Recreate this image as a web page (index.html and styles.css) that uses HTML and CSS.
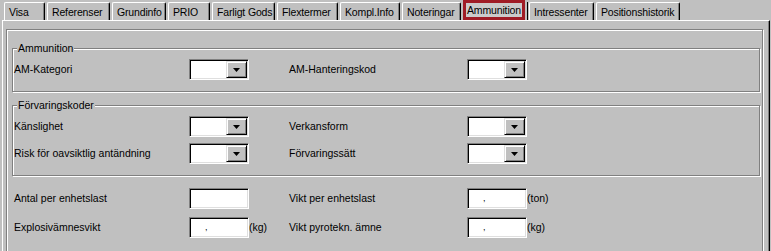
FILE: index.html
```html
<!DOCTYPE html>
<html lang="sv">
<head>
<meta charset="utf-8">
<title>Ammunition</title>
<link rel="stylesheet" href="styles.css">
</head>
<body>
<div class="window">
  <div class="tabs">
    <div class="tab tab-visa">Visa</div>
    <div class="tab tab-referenser">Referenser</div>
    <div class="tab tab-grundinfo">Grundinfo</div>
    <div class="tab tab-prio">PRIO</div>
    <div class="tab tab-farligt">Farligt Gods</div>
    <div class="tab tab-flextermer">Flextermer</div>
    <div class="tab tab-kompl">Kompl.Info</div>
    <div class="tab tab-noteringar">Noteringar</div>
    <div class="tab-active"><span class="focus">Ammunition</span></div>
    <div class="tab tab-intressenter">Intressenter</div>
    <div class="tab tab-position">Positionshistorik</div>
  </div>
  <div class="panel">
    <div class="frame">
      <div class="group">
        <div class="group-title">Ammunition</div>
        <div class="row">
          <span class="label">AM-Kategori</span>
          <span class="combo"><span class="combo-field"></span><span class="combo-btn"><svg class="arrow" width="7" height="4" viewBox="0 0 7 4"><polygon points="0,0 7,0 3.5,4"/></svg></span></span>
          <span></span>
          <span class="label">AM-Hanteringskod</span>
          <span class="combo"><span class="combo-field"></span><span class="combo-btn"><svg class="arrow" width="7" height="4" viewBox="0 0 7 4"><polygon points="0,0 7,0 3.5,4"/></svg></span></span>
        </div>
      </div>
      <div class="group">
        <div class="group-title">Förvaringskoder</div>
        <div class="row">
          <span class="label">Känslighet</span>
          <span class="combo"><span class="combo-field"></span><span class="combo-btn"><svg class="arrow" width="7" height="4" viewBox="0 0 7 4"><polygon points="0,0 7,0 3.5,4"/></svg></span></span>
          <span></span>
          <span class="label">Verkansform</span>
          <span class="combo"><span class="combo-field"></span><span class="combo-btn"><svg class="arrow" width="7" height="4" viewBox="0 0 7 4"><polygon points="0,0 7,0 3.5,4"/></svg></span></span>
        </div>
        <div class="row">
          <span class="label">Risk för oavsiktlig antändning</span>
          <span class="combo"><span class="combo-field"></span><span class="combo-btn"><svg class="arrow" width="7" height="4" viewBox="0 0 7 4"><polygon points="0,0 7,0 3.5,4"/></svg></span></span>
          <span></span>
          <span class="label">Förvaringssätt</span>
          <span class="combo"><span class="combo-field"></span><span class="combo-btn"><svg class="arrow" width="7" height="4" viewBox="0 0 7 4"><polygon points="0,0 7,0 3.5,4"/></svg></span></span>
        </div>
      </div>
      <div class="plain">
        <div class="row">
          <span class="label">Antal per enhetslast</span>
          <span class="textbox"></span>
          <span></span>
          <span class="label">Vikt per enhetslast</span>
          <span class="textbox">,</span>
          <span class="unit">(ton)</span>
        </div>
        <div class="row">
          <span class="label">Explosivämnesvikt</span>
          <span class="textbox">,</span>
          <span class="unit">(kg)</span>
          <span class="label">Vikt pyrotekn. ämne</span>
          <span class="textbox">,</span>
          <span class="unit">(kg)</span>
        </div>
      </div>
    </div>
  </div>
</div>
</body>
</html>
```

FILE: styles.css
```css
html, body {
  margin: 0;
  padding: 0;
  height: 251px;
  overflow: hidden;
  background: #c0c0c0;
}

body {
  font-family: "Liberation Sans", Arial, sans-serif;
  font-size: 10.5px;
  color: #000;
}

.window {
  width: 771px;
}

/* ---------- tabs ---------- */
.tabs {
  display: flex;
  height: 20px;
  padding-left: 4px;
}

.tab {
  box-sizing: border-box;
  height: 18px;
  margin-top: 2px;
  margin-right: 2px;
  padding: 3px 0 0 4px;
  line-height: 13px;
  letter-spacing: -0.15px;
  white-space: nowrap;
  overflow: hidden;
  border-top: 1px solid #fff;
  border-left: 1px solid #fff;
  border-right: 1px solid #000;
  border-radius: 2px 2px 0 0;
  box-shadow: inset -1px 0 #808080;
}

.tab-visa { width: 41px; }
.tab-referenser { width: 63px; }
.tab-grundinfo { width: 54px; }
.tab-prio { width: 42px; }
.tab-farligt { width: 63px; }
.tab-flextermer { width: 61px; }
.tab-kompl { width: 60px; }
.tab-noteringar { width: 59px; }
.tab-intressenter { width: 65px; }
.tab-position { width: 84px; margin-right: 0; }

.tab-active {
  box-sizing: border-box;
  width: 65px;
  height: 18px;
  margin-top: 2px;
  margin-right: 1px;
  border-right: 1px solid #000;
}

.focus {
  display: block;
  box-sizing: border-box;
  width: 62px;
  height: 20px;
  margin-top: -2px;
  border: 3px solid #a01c26;
  background: #cbcbcb;
  padding: 1px 0 0 1px;
  line-height: 13px;
  letter-spacing: -0.15px;
  white-space: nowrap;
  overflow: hidden;
}

/* ---------- panel ---------- */
.panel {
  box-sizing: border-box;
  width: 768px;
  margin-left: 2px;
  border-top: 1px solid #fff;
  border-left: 1px solid #fff;
  border-right: 1px solid #000;
  box-shadow: inset -1px 0 #808080;
  padding: 8px 6px 0 3px;
}

.frame {
  border: 1px solid #808080;
  box-shadow: inset 1px 1px #fff, 1px 1px #fff;
  padding: 18px 2px 40px 5px;
}

.group {
  border: 1px solid #808080;
  box-shadow: inset 1px 1px #fff, 1px 1px #fff;
  padding: 0 0 11px 1px;
}

.group + .group {
  margin-top: 13px;
}

.group-title {
  width: fit-content;
  margin: -7px 0 0 3px;
  padding: 0 1px;
  line-height: 13px;
  background: #c0c0c0;
  white-space: nowrap;
}

.plain {
  margin-top: 12px;
  padding-left: 2px;
}

/* ---------- rows ---------- */
.row {
  display: grid;
  grid-template-columns: 175px 60px 40px 178px 60px auto;
  align-items: center;
  height: 21px;
  margin-top: 4px;
}

.row + .row {
  margin-top: 6px;
}

.plain .row {
  margin-top: 0;
}

.plain .row + .row {
  margin-top: 8px;
}

.label, .unit {
  white-space: nowrap;
  line-height: 13px;
}

/* ---------- controls ---------- */
.combo, .textbox {
  box-sizing: border-box;
  width: 60px;
  height: 21px;
  border: 1px solid;
  border-color: #808080 #fff #fff #808080;
  box-shadow: inset 1px 1px #000, inset -1px -1px #dfdfdf;
  background: #fff;
}

.combo {
  display: flex;
  padding: 1px;
}

.combo-field {
  flex: 1;
}

.combo-btn {
  box-sizing: border-box;
  display: flex;
  align-items: center;
  justify-content: center;
  width: 21px;
  height: 17px;
  background: #c0c0c0;
  border: 1px solid;
  border-color: #dfdfdf #000 #000 #dfdfdf;
  box-shadow: inset 1px 1px #fff, inset -1px -1px #808080;
}

.arrow {
  display: block;
  fill: #000;
}

.textbox {
  display: block;
  padding-left: 15px;
  font-size: 9px;
  line-height: 19px;
}
```
